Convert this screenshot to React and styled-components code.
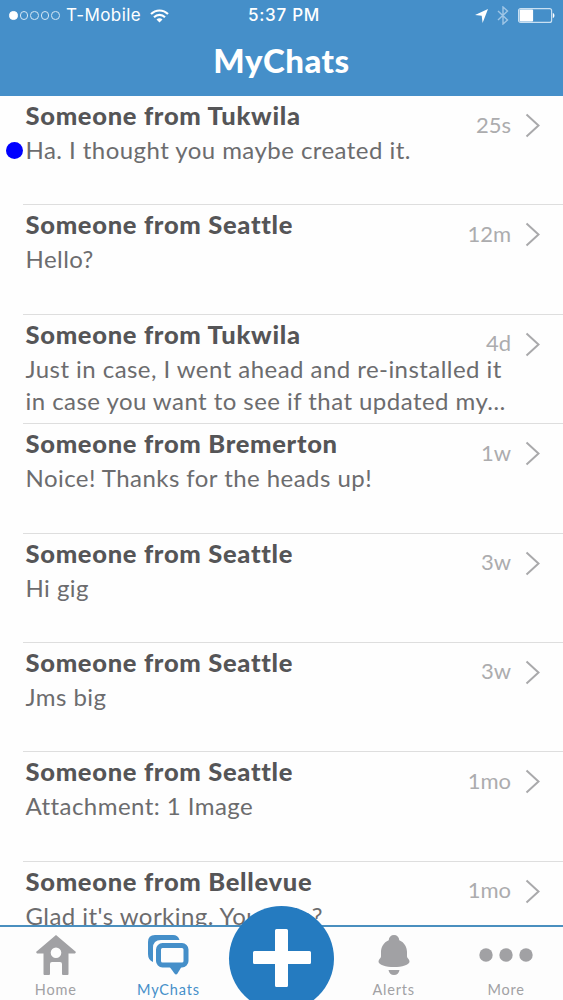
import React from 'react';
import styled, { createGlobalStyle } from 'styled-components';

const GlobalStyle = createGlobalStyle`
  * {
    box-sizing: border-box;
  }
  body {
    margin: 0;
    background: #fdfdfd;
    font-family: Lato, 'Liberation Sans', sans-serif;
  }
`

const Screen = styled.div`
  width: 563px;
  height: 1000px;
  overflow: hidden;
  display: flex;
  flex-direction: column;
  background: #fefefe;
`

const Header = styled.header`
  flex: none;
  height: 96px;
  background: #458fc9;
  color: #ffffff;
`

const StatusBar = styled.div`
  display: grid;
  grid-template-columns: 1fr auto 1fr;
  align-items: center;
  height: 31px;
  padding: 0 8px 0 9px;
  font-family: Inter, 'Liberation Sans', sans-serif;
  font-size: 17px;
  line-height: 31px;
`

const StatusLeft = styled.div`
  display: flex;
  align-items: center;
`

const StatusRight = styled.div`
  display: flex;
  align-items: center;
  justify-content: flex-end;
  gap: 9px;
`

const Signal = styled.div`
  display: flex;
  gap: 2px;
  margin-right: 6px;
`

const SignalDot = styled.span`
  width: 8.6px;
  height: 8.6px;
  border-radius: 50%;
  border: 1px solid ${({ $on }) => ($on ? '#ffffff' : '#d5e7f5')};
  background: ${({ $on }) => ($on ? '#ffffff' : 'transparent')};
`

const Carrier = styled.span`
  margin-right: 9px;
  letter-spacing: 0.45px;
`

const Clock = styled.span`
  padding-left: 4px;
  font-weight: 500;
  letter-spacing: 0.75px;
`

const PageTitle = styled.h1`
  margin: 0;
  text-align: center;
  font-size: 33px;
  line-height: 58px;
  font-weight: 900;
  letter-spacing: 0.5px;
`

const ChatList = styled.main`
  flex: 1;
  min-height: 0;
  overflow: hidden;
  padding-left: 23px;
`

const Row = styled.div`
  display: flex;
  height: 109.4px;
  padding: 3px 23px 0 2.5px;
  border-bottom: 1.4px solid #dedede;
`

const Message = styled.div`
  flex: 1;
  min-width: 0;
`

const Sender = styled.h2`
  margin: 0;
  font-size: 25.5px;
  line-height: 32px;
  font-weight: 900;
  letter-spacing: 0.7px;
  color: #555557;
  white-space: nowrap;
`

const Preview = styled.p`
  position: relative;
  margin: 3px 0 0;
  font-size: 24px;
  line-height: 32.6px;
  letter-spacing: 0.45px;
  color: #6c6c6e;
  white-space: pre;
`

const Unread = styled.span`
  position: absolute;
  left: -19.5px;
  top: 8px;
  width: 17px;
  height: 17px;
  border-radius: 50%;
  background: #0000ff;
`

const Meta = styled.div`
  flex: none;
  display: flex;
  align-items: center;
  gap: 14px;
  height: 53px;
  font-size: 22px;
  line-height: 24px;
  color: #acacae;
`

const Time = styled.span`
  padding-bottom: 2px;
`

const TabBar = styled.nav`
  flex: none;
  display: grid;
  grid-template-columns: repeat(5, 1fr);
  height: 75px;
  border-top: 2px solid #4a8fbf;
  background: #fdfdfd;
`

const Tab = styled.div`
  display: flex;
  flex-direction: column;
  align-items: center;
  padding: 7px 1px 0 0;
  font-size: 14.5px;
  line-height: 18px;
  letter-spacing: 0.8px;
  color: ${({ $active }) => ($active ? '#458fc9' : '#a1a1a4')};
`

const TabIcon = styled.svg`
  display: block;
  width: 60px;
  height: 44px;
  margin-bottom: 3px;
`

const AddSlot = styled.div`
  position: relative;
`

const AddButton = styled.button`
  position: absolute;
  left: 50%;
  top: -21px;
  width: 105px;
  height: 105px;
  margin-left: -52.5px;
  padding: 0;
  border: 0;
  border-radius: 50%;
  background: #257bc0;
`

const chats = [
  { from: 'Tukwila', text: 'Ha. I thought you maybe created it.', time: '25s', unread: true },
  { from: 'Seattle', text: 'Hello?', time: '12m' },
  {
    from: 'Tukwila',
    text: 'Just in case, I went ahead and re-installed it\nin case you want to see if that updated my…',
    time: '4d',
  },
  { from: 'Bremerton', text: 'Noice! Thanks for the heads up!', time: '1w' },
  { from: 'Seattle', text: 'Hi gig', time: '3w' },
  { from: 'Seattle', text: 'Jms big', time: '3w' },
  { from: 'Seattle', text: 'Attachment: 1 Image', time: '1mo' },
  { from: 'Bellevue', text: "Glad it's working. You able?", time: '1mo' },
]

const WifiIcon = () => (
  <svg width="19" height="14" viewBox="0 0 19 14" fill="none" stroke="#fff" strokeWidth="2.1">
    <path d="M1 5.1C5.8.2 13.2.2 18 5.1" />
    <path d="M4 8.2c3.1-3.1 7.9-3.1 11 0" />
    <path d="M6.5 10.6c1.7-1.7 4.3-1.7 6 0l-3 3z" fill="#fff" stroke="none" />
  </svg>
)

const LocationIcon = () => (
  <svg width="13" height="14" viewBox="0 0 13 14" fill="#fff">
    <path d="M13 0 7.6 14 6.7 6.7 0 6z" />
  </svg>
)

const BluetoothIcon = () => (
  <svg width="12" height="19" viewBox="0 0 12 19" fill="none" stroke="#9fc6e6" strokeWidth="1.4">
    <path d="m1 5 9.5 9L6 18V1l4.5 4L1 14" />
  </svg>
)

const BatteryIcon = () => (
  <svg width="37" height="15" viewBox="0 0 37 15">
    <rect x=".6" y=".6" width="33" height="13.8" rx="2" fill="none" stroke="#c9e0f2" strokeWidth="1.2" />
    <rect x="1.6" y="1.6" width="13.5" height="11.8" rx="1" fill="#fff" />
    <path d="M34.8 5c2.2.5 2.2 4.5 0 5z" fill="#fff" />
  </svg>
)

const Chevron = () => (
  <svg width="15" height="25" viewBox="0 0 15 25" fill="none" stroke="#a9a9ab" strokeWidth="2">
    <path d="m1.5 1.5 12 11-12 11" />
  </svg>
)

const HomeIcon = () => (
  <TabIcon viewBox="0 0 60 44" fill="currentColor">
    <path
      fillRule="evenodd"
      d="M30 1 50 18l-1 1.5h-6.500V40q0 1-1 1H37q-1 0-1-1V30q0-2-2-2h-8q-2 0-2 2v10q0 1-1 1h-4.500q-1 0-1-1V19.500H11L10 18zm0 12.500a5.300 5.300 0 1 0 0 10.600 5.300 5.300 0 1 0 0-10.600z"
    />
  </TabIcon>
)

const ChatsIcon = () => (
  <TabIcon viewBox="0 0 60 44" fill="currentColor">
    <path d="M15 28Q10 26 10 20V8Q10 1 17 1H35Q40 1 41.5 6H23Q15 6 15 14z" />
    <rect x="20.5" y="11.5" width="27.5" height="19.5" rx="4" fill="none" stroke="currentColor" strokeWidth="5" />
    <path d="M31 32h13l-4.5 7.5q-1.5 2-3 0z" />
  </TabIcon>
)

const BellIcon = () => (
  <TabIcon viewBox="0 0 60 44" fill="currentColor">
    <path d="M30 1c3 0 5 2 5.3 5.2C40.5 8.5 43 13 43 18v4.5c0 2 2.5 2.5 2.5 5C45.5 31 38 33 30 33s-15.5-2-15.5-5.5c0-2.5 2.5-3 2.5-5V18c0-5 2.5-9.5 7.700-11.800C25 3 27 1 30 1z" />
    <path d="M24.5 36h11c-.5 3-2.5 5-5.5 5s-5-2-5.5-5z" />
  </TabIcon>
)

const MoreIcon = () => (
  <TabIcon viewBox="0 0 60 44" fill="currentColor">
    <circle cx="10" cy="21" r="6.7" />
    <circle cx="30" cy="21" r="6.7" />
    <circle cx="50" cy="21" r="6.7" />
  </TabIcon>
)

const ChatRow = ({ chat }) => (
  <Row>
    <Message>
      <Sender>Someone from {chat.from}</Sender>
      <Preview>
        {chat.unread && <Unread />}
        {chat.text}
      </Preview>
    </Message>
    <Meta>
      <Time>{chat.time}</Time>
      <Chevron />
    </Meta>
  </Row>
)

export default function App() {
  return (
    <Screen>
      <GlobalStyle />
      <Header>
        <StatusBar>
          <StatusLeft>
            <Signal>
              {[true, false, false, false, false].map((on, i) => (
                <SignalDot key={i} $on={on} />
              ))}
            </Signal>
            <Carrier>T-Mobile</Carrier>
            <WifiIcon />
          </StatusLeft>
          <Clock>5:37 PM</Clock>
          <StatusRight>
            <LocationIcon />
            <BluetoothIcon />
            <BatteryIcon />
          </StatusRight>
        </StatusBar>
        <PageTitle>MyChats</PageTitle>
      </Header>
      <ChatList>
        {chats.map((chat, i) => (
          <ChatRow key={i} chat={chat} />
        ))}
      </ChatList>
      <TabBar>
        <Tab>
          <HomeIcon />
          Home
        </Tab>
        <Tab $active>
          <ChatsIcon />
          MyChats
        </Tab>
        <AddSlot>
          <AddButton aria-label="New chat">
            <svg width="105" height="105" viewBox="0 0 105 105" fill="#fff">
              <path d="M47.5 23h10q1.5 0 1.5 1.5V45h21.5q1.5 0 1.5 1.5v10q0 1.5-1.5 1.5H59v21.5q0 1.5-1.5 1.5h-10q-1.5 0-1.5-1.5V58H25.5q-1.5 0-1.5-1.5v-10q0-1.5 1.5-1.5H46V24.5q0-1.5 1.5-1.5z" />
            </svg>
          </AddButton>
        </AddSlot>
        <Tab>
          <BellIcon />
          Alerts
        </Tab>
        <Tab>
          <MoreIcon />
          More
        </Tab>
      </TabBar>
    </Screen>
  )
}
